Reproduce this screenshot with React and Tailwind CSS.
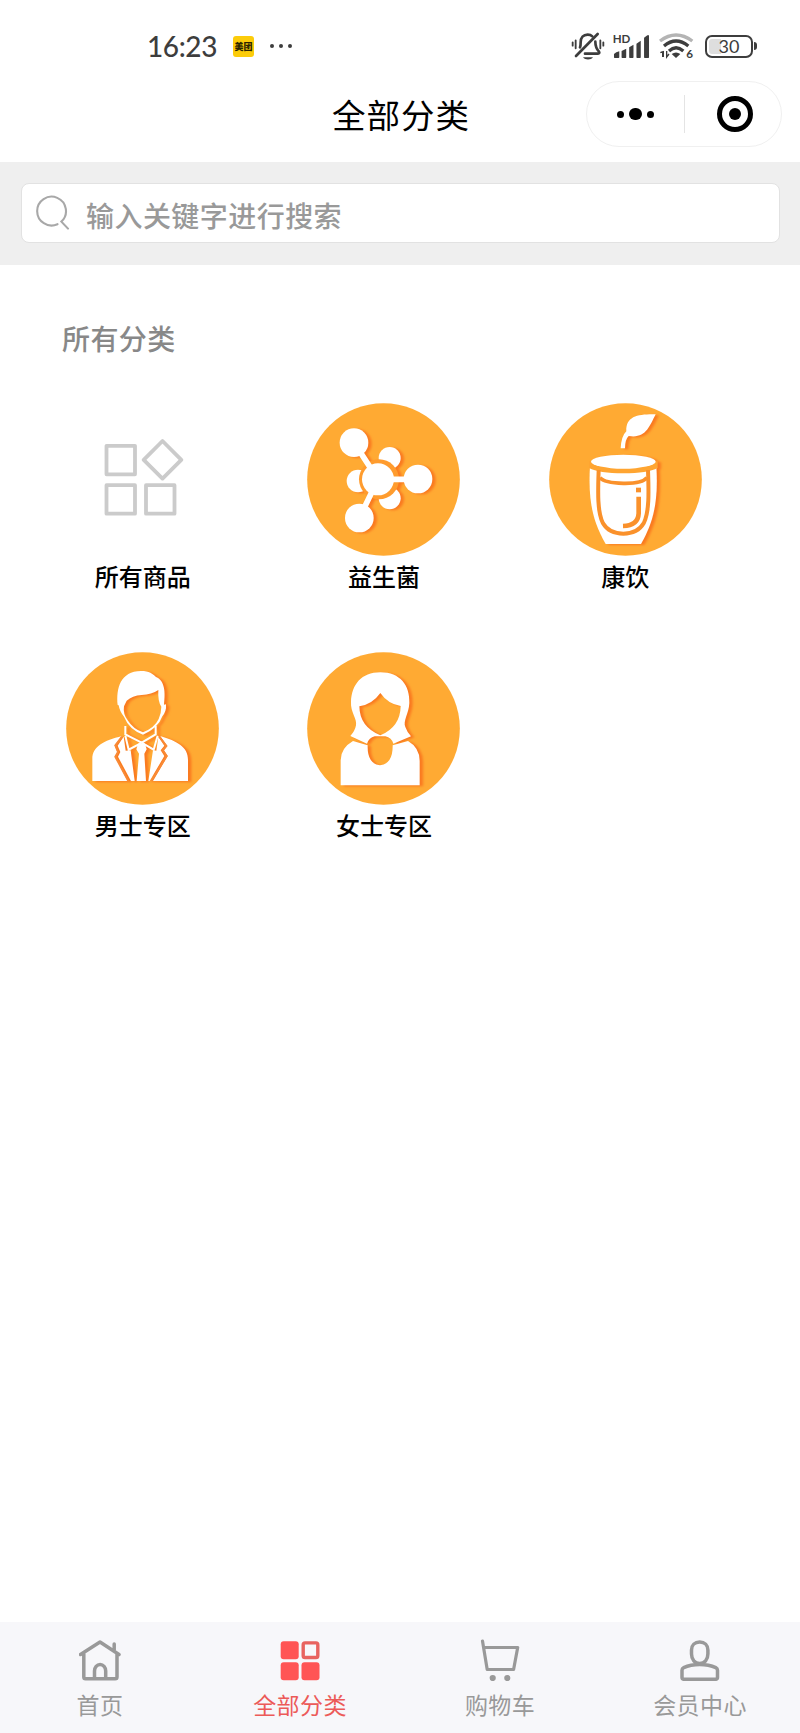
import React, { useState } from 'react';

const BellOffIcon = () => (
  <svg viewBox="0 0 102 90" className="w-[34px] h-[30px]" fill="none" stroke="#3d3d3d" strokeWidth="8" strokeLinecap="round">
    <path d="M5 34v10M14 28v24M88 28v24M97 34v10" strokeWidth="5.5" />
    <path d="M27 49c2-4 2-9 2-15 0-14 8-23 21-23 6 0 10 1 14 5M73 32c0 14 2 20 11 30 2 3 1 6-3 6H42" />
    <path d="M80 9 15 75" />
    <path d="M36 79c6 9 24 9 30 0z" fill="#3d3d3d" stroke="none" />
  </svg>
);

const SignalIcon = () => (
  <svg viewBox="0 0 112 78" className="w-[37px] h-[26px]" fill="#3d3d3d">
    <text x="-1" y="31" fontSize="35" fontWeight="700" fontFamily="Lato, sans-serif">HD</text>
    <path d="M3 63q6-6 16-8v18q0 2-2 2H5q-2 0-2-2zM26 54l14-7v26q0 2-2 2H28q-2 0-2-2zM49 43l13-8v38q0 2-2 2h-9q-2 0-2-2zM71 32l13-9v50q0 2-2 2h-9q-2 0-2-2zM94 14l9-7q6-3 6 3v63q0 2-2 2H96q-2 0-2-2z" />
  </svg>
);

const WifiIcon = () => (
  <svg viewBox="0 0 105 84" className="w-[35px] h-[28px]" fill="none" strokeWidth="10">
    <path d="M3 27Q51-9 100 27" stroke="#b4b4b4" />
    <path d="M15 42Q51 12 88 42M30 57Q51 38 73 57" stroke="#3d3d3d" />
    <path d="M38 66q13-9 26 0L51 78z" fill="#3d3d3d" />
    <path d="M4 62l7-3v16M13 75V57M23 57v18l7-9" stroke="#3d3d3d" strokeWidth="4" />
    <text x="82" y="77" fill="#3d3d3d" fontSize="35" fontWeight="700" fontFamily="Lato, sans-serif">6</text>
  </svg>
);

const StatusBar = () => (
  <div className="h-[81px] pt-[26px]">
    <div className="flex h-10 items-center pl-[147px] pr-[43px] text-[#3d3d3d]">
      <span className="w-[86px] whitespace-nowrap font-[Lato,sans-serif] text-[28px] font-medium leading-10 tracking-[-0.4px]">16:23</span>
      <span className="flex h-[21px] w-[21px] items-center justify-center rounded-[3px] bg-[#fccc0a] text-[9px] font-black leading-none text-[#2b2400]">美团</span>
      <span className="ml-4 flex gap-[5px]">
        <i className="h-1 w-1 rounded-full bg-[#3d3d3d]" />
        <i className="h-1 w-1 rounded-full bg-[#3d3d3d]" />
        <i className="h-1 w-1 rounded-full bg-[#3d3d3d]" />
      </span>
      <div className="ml-auto flex items-center">
        <BellOffIcon />
        <span className="ml-2"><SignalIcon /></span>
        <span className="ml-[9px]"><WifiIcon /></span>
        <div className="ml-[11px] flex items-center gap-px">
          <div className="h-[23px] w-[48px] rounded-[7px] border-2 border-[#3d3d3d] p-[2px]">
            <div className="flex h-full items-center justify-center rounded-[3px] bg-linear-to-r from-[#dedede] from-30% to-transparent to-30% font-[Lato,sans-serif] text-[18px] leading-none">30</div>
          </div>
          <i className="h-2 w-[3px] rounded-r-sm bg-[#3d3d3d]" />
        </div>
      </div>
    </div>
  </div>
);

const TitleBar = () => (
  <header className="grid h-[81px] grid-cols-[1fr_auto_1fr] items-start">
    <h1 className="col-start-2 pl-[2px] text-[33.5px] leading-[66px] tracking-[1px] text-black">全部分类</h1>
    <div className="mr-[18px] flex h-[66px] w-[196px] items-center justify-self-end rounded-full border border-[#f0f0f0]">
      <button className="flex flex-1 items-center justify-center gap-[5.5px]" aria-label="更多">
        <i className="h-[7px] w-[7px] rounded-full bg-black" />
        <i className="h-[12.500px] w-[12.500px] rounded-full bg-black" />
        <i className="h-[7px] w-[7px] rounded-full bg-black" />
      </button>
      <i className="h-[38px] w-px bg-[#e4e4e4]" />
      <button className="flex flex-1 items-center justify-center" aria-label="关闭">
        <span className="mr-[-4px] flex h-9 w-9 items-center justify-center rounded-full border-[5px] border-black">
          <i className="h-3 w-3 rounded-full bg-black" />
        </span>
      </button>
    </div>
  </header>
);

const SearchBar = () => (
  <div className="bg-[#efefef] px-[21px] pt-[21px] pb-[22px]">
    <label className="mr-[-1px] flex h-[60px] items-center rounded-lg border border-[#e2e2e2] bg-white pl-[13px]">
      <svg viewBox="0 0 36 36" className="h-9 w-9 -mt-[3px]" fill="none" stroke="#a8a8a8" strokeWidth="2.1" strokeLinecap="round">
        <path d="M22.500 30.200A14.400 14.400 0 1 1 26.400 27.600L33 34.600" />
      </svg>
      <span className="ml-[15px] mt-1 text-[28px] font-medium leading-10 tracking-[0.45px] text-[#999]">输入关键字进行搜索</span>
    </label>
  </div>
);

const AllIcon = () => (
  <svg viewBox="0 0 153 153" className="h-[153px] w-[153px]" fill="none" stroke="#cbcbcb" strokeWidth="3.8" strokeLinejoin="round">
    <path d="M40.500 42.800h28.500v28.500h-28.500zM40.500 82.200h28.500v28.500h-28.500zM80 82.200h28.500v28.500h-28.500zM96.500 38 115.300 56.800 96.500 75.600 77.700 56.800z" />
  </svg>
);

// orange disc with a white figure that throws a darker shadow
const Disc = ({ viewBox, cx, cy, children }) => (
  <svg viewBox={viewBox} className="h-[153px] w-[153px]">
    <circle cx={cx} cy={cy} r="229" fill="#ffaa33" />
    <g className="drop-shadow-[10px_3px_3px_#fa7a20]">{children}</g>
  </svg>
);

const ProbioticIcon = () => (
  <Disc viewBox="37 39 459 459" cx="266.500" cy="268.500">
    <g fill="#fff">
      <circle cx="285" cy="204" r="33" />
      <circle cx="285" cy="325" r="33" />
      <circle cx="190" cy="273" r="34" />
    </g>
    <circle cx="253" cy="268" r="60" fill="#ff9c2e" />
    <path d="M178 158 250 268H370M250 268 194 384" fill="none" stroke="#fff" strokeWidth="17" />
    <g fill="#fff">
      <circle cx="178" cy="158" r="43" />
      <circle cx="370" cy="267" r="43" />
      <circle cx="194" cy="384" r="43" />
      <circle cx="250" cy="268" r="48" />
    </g>
  </Disc>
);

const DrinkIcon = () => (
  <Disc viewBox="40 39 459 459" cx="269.500" cy="268.500">
    <path d="M360 73C308 72 270 78 272 124q-15 14-17 51h13q0-27 11-37C330 146 340 112 360 73z" fill="#fff" />
    <path d="M163 228h199C368 330 356 392 316 462H210C170 392 157 330 163 228z" fill="#fff" />
    <path d="M160 214h206v20q-30 16-103 16t-103-16z" fill="#ffa531" />
    <ellipse cx="263" cy="215" rx="97" ry="21" fill="#fff" />
    <g fill="none" stroke="#fa912b">
      <path d="M189 240C187 300 184 365 202 400Q220 431 263 431T324 400C342 365 339 300 337 240" strokeWidth="12" />
      <path d="M193 263Q206 279 263 280T334 263" strokeWidth="11" />
      <path d="M309 320V370Q307 407 262 408" strokeWidth="14" />
      <path d="M301 300h15" strokeWidth="14" />
    </g>
  </Disc>
);

const ManIcon = () => (
  <Disc viewBox="35 36 459 459" cx="264.500" cy="265.500">
    <path d="M190 195C185 145 198 94 260 93c25 0 35 8 45 18 28 12 28 48 24 83l6-1q2 20-11 36-12 35-58 55-42-16-57-54-13-15-16-34zM209 199q-4 25 12 43 15 24 45 35 35-14 47-40 8-18 8-37-11-16-9-50-20 14-50 15-28 2-45 17z" fill="#fff" fillRule="evenodd" />
    <path d="M213 258v25l49 25 42-25v-25" fill="none" stroke="#fff" strokeWidth="6" />
    <path d="M203 288l-22 28 8 20-7 14 38 73H114v-66c0-38 34-55 89-69zM317 288c52 16 84 32 84 72v63H296l44-75-11-17 10-13z" fill="#fff" />
    <path d="M208 290l-18 27 8 19-7 14 39 73h11l-12-92-15 1zM312 290l18 27-11 14 11 17-44 75h-4l14-92 10 1z" fill="#fff" />
    <path d="M213 287l10 42 30-16 9-6 9 6 27 16 12-42" fill="none" stroke="#fff" strokeWidth="6" />
    <path d="M251 311h21l5 17-7 13 5 82h-28l7-82-8-13z" fill="#fff" />
    <path d="M203 290l-20 26 8 20-8 14 39 73M315 290l21 28-11 13 12 17-46 75" fill="none" stroke="#f98a36" strokeWidth="6" />
  </Disc>
);

const WomanIcon = () => (
  <Disc viewBox="37 36 459 459" cx="266.500" cy="265.500">
    <path d="M257 97c60 0 89 40 87 92-1 30-20 55-12 72q5 15 17 28l-53 22q-5-18-24-22h-32q-17 4-23 22l-50-23q14-15 17-32c4-20-17-40-15-70 2-52 31-89 88-89zM257 159q-24 34-63 40 1 62 63 87 60-25 61-88-38-6-61-39z" fill="#fff" fillRule="evenodd" />
    <path d="M138 436v-75q0-37 37-58l44 13q-2 55 37 60 39-5 38-60l46-13q35 20 35 60v73z" fill="#fff" />
  </Disc>
);

const HomeIcon = () => (
  <svg viewBox="0 0 42 42" className="h-[42px] w-[42px]" fill="none" stroke="currentColor" strokeWidth="3.5" strokeLinecap="round" strokeLinejoin="round">
    <path d="M1.500 15.500 21 3 40 15.500M4.800 15v23q0 1.800 1.800 1.800H36.200q1.800 0 1.800-1.800V15M15.500 39V32a5.600 6.500 0 0 1 11.200 0v7M35.200 5v6" />
  </svg>
);

const GridIcon = () => (
  <svg viewBox="0 0 42 42" className="h-[42px] w-[42px]" fill="#ff5555">
    <rect x="1.700" y="2.200" width="18" height="18" rx="3" />
    <rect x="1.700" y="23.200" width="18" height="18" rx="3" />
    <rect x="22.500" y="23.200" width="18" height="18" rx="3" />
    <rect x="24.200" y="3.900" width="14.600" height="14.600" rx="1.800" fill="none" stroke="#e8635f" strokeWidth="3.400" />
  </svg>
);

const CartIcon = () => (
  <svg viewBox="0 0 42 42" className="h-[42px] w-[42px]" fill="none" stroke="currentColor" strokeWidth="3.2" strokeLinecap="round" strokeLinejoin="round">
    <path d="M3.500 2 8.200 30.500H34.600L38.700 8.500H4.700" />
    <circle cx="13.700" cy="39" r="3.100" fill="currentColor" stroke="none" />
    <circle cx="28.300" cy="39" r="3.100" fill="currentColor" stroke="none" />
  </svg>
);

const MemberIcon = () => (
  <svg viewBox="0 0 42 42" className="h-[42px] w-[42px]" fill="none" stroke="currentColor" strokeWidth="3.500" strokeLinejoin="round">
    <path d="M20.700 3c4.900 0 8.200 3.300 8.200 8v4c0 5.400-3.400 9.500-8.200 9.500S12.500 20.400 12.500 15v-4c0-4.700 3.300-8 8.200-8z" />
    <path d="M20.700 25.500c-6 0-12 1.300-16 3.100q-1.700.8-1.700 2.700v7q0 2 2 2h31.500q2 0 2-2v-7q0-1.900-1.700-2.700c-4-1.800-10.100-3.100-16.100-3.100z" />
  </svg>
);

const categories = [
  { name: '所有商品', Icon: AllIcon },
  { name: '益生菌', Icon: ProbioticIcon },
  { name: '康饮', Icon: DrinkIcon },
  { name: '男士专区', Icon: ManIcon },
  { name: '女士专区', Icon: WomanIcon },
];

const tabs = [
  { id: 'home', name: '首页', Icon: HomeIcon },
  { id: 'category', name: '全部分类', Icon: GridIcon },
  { id: 'cart', name: '购物车', Icon: CartIcon },
  { id: 'member', name: '会员中心', Icon: MemberIcon },
];

const App = () => {
  const [active, setActive] = useState('category');

  return (
    <div className="flex h-[1733px] w-[800px] flex-col overflow-hidden bg-white font-['Noto_Sans_CJK_SC',sans-serif]">
      <StatusBar />
      <TitleBar />
      <SearchBar />
      <main className="pt-[52px]">
        <h2 className="pl-[62px] text-[28px] font-medium leading-[42px] tracking-[0.4px] text-[#888]">所有分类</h2>
        <div className="ml-[22px] mt-[44px] grid w-[724px] grid-cols-3 gap-y-[54px]">
          {categories.map(({ name, Icon }) => (
            <div key={name} className="flex flex-col items-center">
              <Icon />
              <span className="mb-[2px] text-[24px] font-medium leading-10 text-black">{name}</span>
            </div>
          ))}
        </div>
      </main>
      <nav className="mt-auto grid h-[111px] grid-cols-4 bg-[#f7f7fa]">
        {tabs.map(({ id, name, Icon }) => (
          <button
            key={id}
            onClick={() => setActive(id)}
            className={`flex flex-col items-center pt-[17px] ${active === id ? 'text-[#ec5a58]' : 'text-[#999]'}`}
          >
            <Icon />
            <span className="mt-[6px] text-[23px] leading-[34px] tracking-[0.4px]">{name}</span>
          </button>
        ))}
      </nav>
    </div>
  );
};

export default App;
